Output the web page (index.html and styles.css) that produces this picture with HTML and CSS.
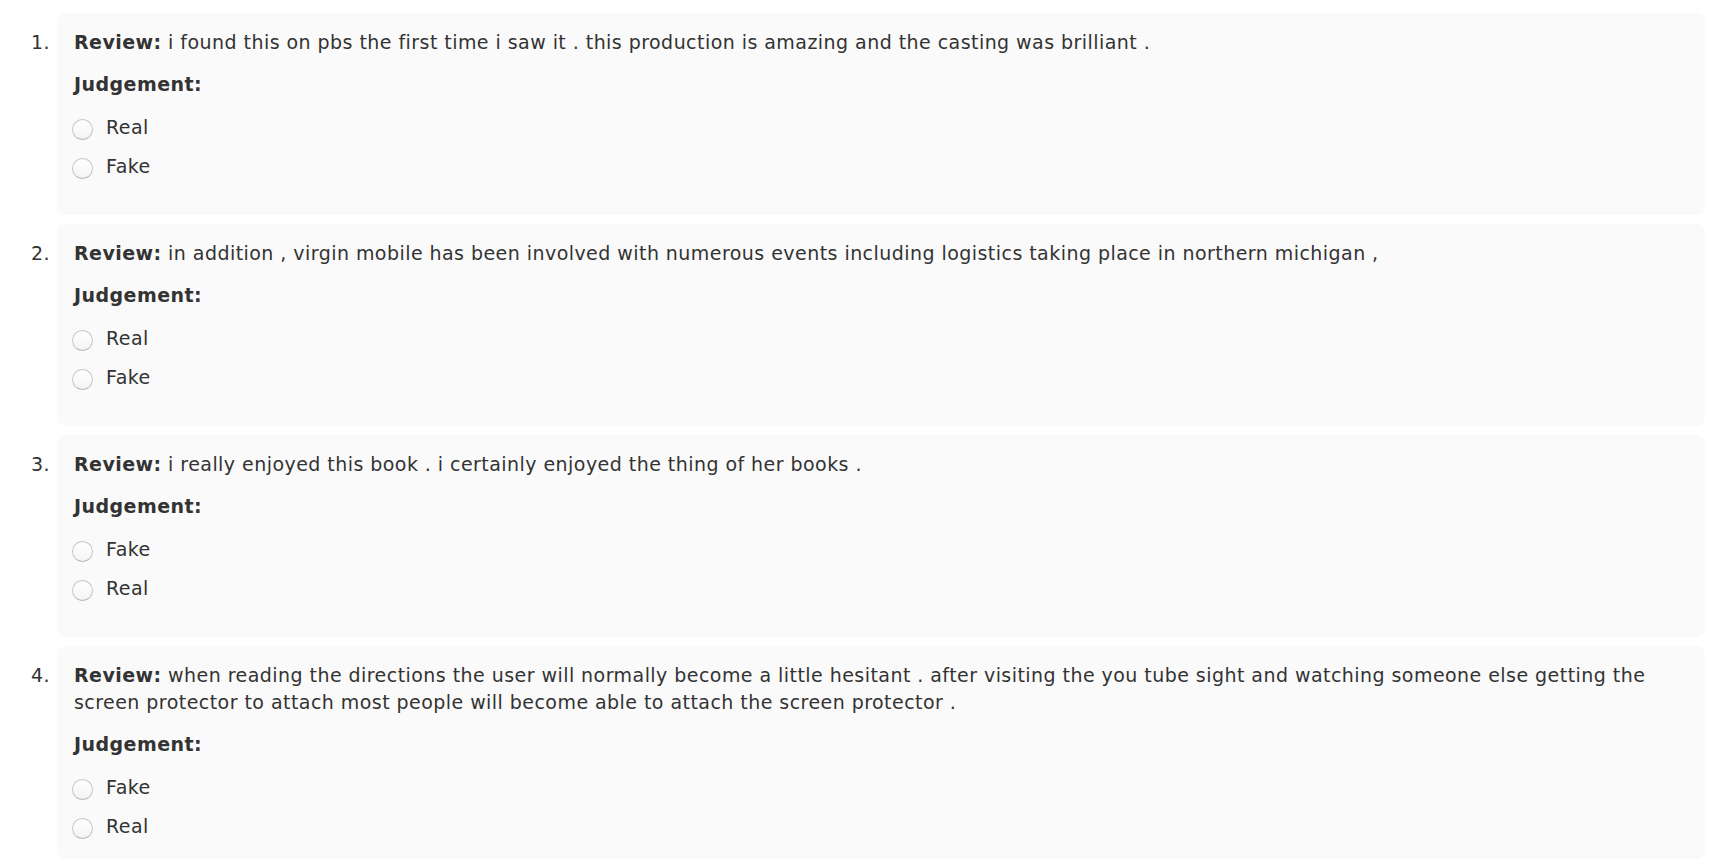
FILE: index.html
```html
<!DOCTYPE html>
<html>
<head>
<meta charset="utf-8">
<link rel="stylesheet" href="styles.css">
</head>
<body>
<ol class="list">
  <li class="item">
    <span class="num">1.</span>
    <div class="card">
      <p class="review"><b>Review:</b> i found this on pbs the first time i saw it . this production is amazing and the casting was brilliant .</p>
      <p class="judge">Judgement:</p>
      <label class="opt"><span class="radio"></span>Real</label>
      <label class="opt"><span class="radio"></span>Fake</label>
    </div>
  </li>
  <li class="item">
    <span class="num">2.</span>
    <div class="card">
      <p class="review"><b>Review:</b> in addition , virgin mobile has been involved with numerous events including logistics taking place in northern michigan ,</p>
      <p class="judge">Judgement:</p>
      <label class="opt"><span class="radio"></span>Real</label>
      <label class="opt"><span class="radio"></span>Fake</label>
    </div>
  </li>
  <li class="item">
    <span class="num">3.</span>
    <div class="card">
      <p class="review"><b>Review:</b> i really enjoyed this book . i certainly enjoyed the thing of her books .</p>
      <p class="judge">Judgement:</p>
      <label class="opt"><span class="radio"></span>Fake</label>
      <label class="opt"><span class="radio"></span>Real</label>
    </div>
  </li>
  <li class="item">
    <span class="num">4.</span>
    <div class="card">
      <p class="review"><b>Review:</b> when reading the directions the user will normally become a little hesitant . after visiting the you tube sight and watching someone else getting the screen protector to attach most people will become able to attach the screen protector .</p>
      <p class="judge">Judgement:</p>
      <label class="opt"><span class="radio"></span>Fake</label>
      <label class="opt"><span class="radio"></span>Real</label>
    </div>
  </li>
</ol>
</body>
</html>
```

FILE: styles.css
```css
html, body {
  margin: 0;
  padding: 0;
  background: #fff;
}
body {
  font-family: "DejaVu Sans", Verdana, sans-serif;
  font-size: 19px;
  line-height: 27px;
  letter-spacing: 0.45px;
  color: #333;
}
.list {
  list-style: none;
  margin: 0;
  padding: 13px 19px 0 0;
}
.item {
  display: flex;
  align-items: flex-start;
  margin-bottom: 9px;
}
.num {
  width: 26px;
  padding: 16px 0 0 31px;
  flex: none;
}
.card {
  flex: 1;
  background: #fafafa;
  border-radius: 8px;
  padding: 16px 40px 35px 17px;
}
.item:last-child .card {
  padding-bottom: 19px;
}
.review {
  margin: 0;
}
.review b {
  font-weight: bold;
}
.judge {
  margin: 15px 0 16px;
  font-weight: bold;
}
.opt {
  display: flex;
  align-items: center;
  height: 27px;
  margin-left: -2px;
}
.opt + .opt {
  margin-top: 12px;
}
.radio {
  width: 19px;
  height: 19px;
  border: 1px solid #c6c6c6;
  border-bottom-color: #b4b4b4;
  border-radius: 50%;
  background: linear-gradient(#ffffff, #f4f4f4);
  margin: 4px 13px 0 0;
  flex: none;
}
```
